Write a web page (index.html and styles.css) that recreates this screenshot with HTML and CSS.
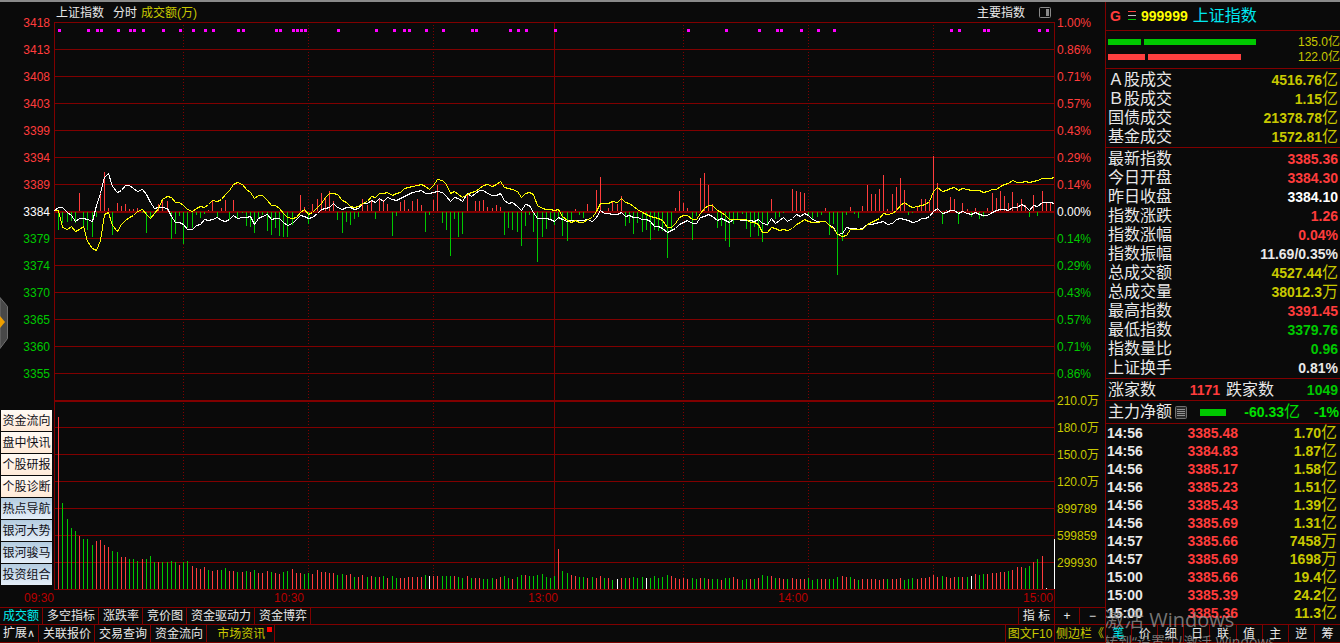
FILE: index.html
```html
<!DOCTYPE html>
<html lang="zh-CN">
<head>
  <meta charset="UTF-8" />
  <meta name="viewport" content="width=device-width, initial-scale=1" />
  <title>上证指数 分时</title>
  <link rel="stylesheet" href="styles.css">
</head>
<body>

  <main class="main">
    <header class="chart-head">
      <span class="name">上证指数</span>
      <span class="period">分时</span>
      <span class="yellow">成交额(万)</span>
      <button class="index-btn">主要指数</button>
      <button class="panel-btn" aria-label="侧栏">
        <svg width="12" height="11" viewBox="0 0 12 11">
          <rect x="0.5" y="0.5" width="11" height="10" rx="1" fill="none" stroke="#8a8a8a"/>
          <rect x="7" y="2" width="3" height="7" fill="#8a8a8a"/>
        </svg>
      </button>
    </header>

    <div class="chart-area">
      <div class="axis axis-left" id="axis-left"></div>
      <svg id="chart" class="chart" viewBox="0 0 1001 568" preserveAspectRatio="none"></svg>
      <div class="axis axis-right" id="axis-right"></div>

      <button class="drawer" aria-label="展开">
        <svg width="8" height="52" viewBox="0 0 8 52">
          <path d="M0 0.5L7.5 9.5V41.5L0 51.5Z" fill="#484848" stroke="#707070"/>
          <path d="M0 19L5 25L0 31Z" fill="#f0a000"/>
        </svg>
      </button>

      <nav class="quick">
        <button>资金流向</button>
        <button>盘中快讯</button>
        <button>个股研报</button>
        <button>个股诊断</button>
        <button class="blue">热点导航</button>
        <button class="blue">银河大势</button>
        <button class="blue">银河骏马</button>
        <button class="blue">投资组合</button>
      </nav>
    </div>

    <div class="time-axis">
      <span>09:30</span>
      <span>10:30</span>
      <span>13:00</span>
      <span>14:00</span>
      <span>15:00</span>
      <span class="time-end"></span>
    </div>

    <div class="tabs tabs-top">
      <button class="active">成交额</button>
      <button>多空指标</button>
      <button>涨跌率</button>
      <button>竞价图</button>
      <button>资金驱动力</button>
      <button>资金博弈</button>
      <div class="tabs-right">
        <button class="w-index">指 标</button>
        <button class="w-plus">+</button>
        <button class="w-minus">−</button>
      </div>
    </div>

    <div class="tabs tabs-bottom">
      <button>扩展<span class="caret">∧</span></button>
      <button>关联报价</button>
      <button>交易查询</button>
      <button>资金流向</button>
      <button class="news">市场资讯<i class="dot"></i></button>
      <div class="tabs-right">
        <button class="yellow w-f10">图文F10</button>
        <button class="yellow w-side">侧边栏《</button>
      </div>
    </div>
  </main>

  <aside class="side">
    <header class="side-head">
      <b class="mark">G</b>
      <svg width="8" height="10" viewBox="0 0 8 10">
        <path d="M0 0.5H8" stroke="#ff3c3c"/>
        <path d="M0 4.5H8" stroke="#c0c0c0"/>
        <path d="M0 8.5H8" stroke="#00c800"/>
      </svg>
      <b class="code">999999</b>
      <span class="title">上证指数</span>
    </header>

    <section class="orders">
      <div class="order green-bar"><i class="w33"></i><i class="w112"></i><span>135.0亿</span></div>
      <div class="order red-bar"><i class="w37"></i><i class="w93"></i><span>122.0亿</span></div>
    </section>

    <table class="quote">
      <tr><th>Ａ股成交</th><td class="yellow">4516.76<u>亿</u></td></tr>
      <tr><th>Ｂ股成交</th><td class="yellow">1.15<u>亿</u></td></tr>
      <tr><th>国债成交</th><td class="yellow">21378.78<u>亿</u></td></tr>
      <tr><th>基金成交</th><td class="yellow">1572.81<u>亿</u></td></tr>
    </table>

    <table class="quote">
      <tr><th>最新指数</th><td class="red">3385.36</td></tr>
      <tr><th>今日开盘</th><td class="red">3384.30</td></tr>
      <tr><th>昨日收盘</th><td class="white">3384.10</td></tr>
      <tr><th>指数涨跌</th><td class="red">1.26</td></tr>
      <tr><th>指数涨幅</th><td class="red">0.04%</td></tr>
      <tr><th>指数振幅</th><td>11.69/0.35%</td></tr>
      <tr><th>总成交额</th><td class="yellow">4527.44<u>亿</u></td></tr>
      <tr><th>总成交量</th><td class="yellow">38012.3<u>万</u></td></tr>
      <tr><th>最高指数</th><td class="red">3391.45</td></tr>
      <tr><th>最低指数</th><td class="green">3379.76</td></tr>
      <tr><th>指数量比</th><td class="green">0.96</td></tr>
      <tr><th>上证换手</th><td>0.81%</td></tr>
    </table>

    <section class="breadth">
      <div class="half up"><span>涨家数</span><b class="red">1171</b></div>
      <div class="half down"><span>跌家数</span><b class="green">1049</b></div>
    </section>

    <section class="netflow">
      <span>主力净额</span>
      <svg class="list-icon" width="12" height="13" viewBox="0 0 12 13">
        <rect x="0.5" y="0.5" width="11" height="12" rx="1" fill="#2a2a2a" stroke="#707070"/>
        <path d="M2 3.5H10M2 5.5H10M2 7.5H10M2 9.5H10" stroke="#909090"/>
      </svg>
      <i class="flow-bar"></i>
      <b class="flow-value">-60.33<u>亿</u></b>
      <b class="flow-pct">-1%</b>
    </section>

    <table class="ticks">
      <tr><td>14:56</td><td class="red">3385.48</td><td class="yellow">1.70<u>亿</u></td></tr>
      <tr><td>14:56</td><td class="red">3384.83</td><td class="yellow">1.87<u>亿</u></td></tr>
      <tr><td>14:56</td><td class="red">3385.17</td><td class="yellow">1.58<u>亿</u></td></tr>
      <tr><td>14:56</td><td class="red">3385.23</td><td class="yellow">1.51<u>亿</u></td></tr>
      <tr><td>14:56</td><td class="red">3385.43</td><td class="yellow">1.39<u>亿</u></td></tr>
      <tr><td>14:56</td><td class="red">3385.69</td><td class="yellow">1.31<u>亿</u></td></tr>
      <tr><td>14:57</td><td class="red">3385.66</td><td class="yellow">7458<u>万</u></td></tr>
      <tr><td>14:57</td><td class="red">3385.69</td><td class="yellow">1698<u>万</u></td></tr>
      <tr><td>15:00</td><td class="red">3385.66</td><td class="yellow">19.4<u>亿</u></td></tr>
      <tr><td>15:00</td><td class="red">3385.39</td><td class="yellow">24.2<u>亿</u></td></tr>
      <tr><td>15:00</td><td class="red">3385.36</td><td class="yellow">11.3<u>亿</u></td></tr>
    </table>

    <nav class="side-tabs">
      <button class="active">笔</button>
      <button>价</button>
      <button>细</button>
      <button>日</button>
      <button>联</button>
      <button>值</button>
      <button>主</button>
      <button>逆</button>
      <button>筹</button>
    </nav>

    <div class="watermark">
      <div class="big">激活 Windows</div>
      <div class="small">转到“设置”以激活 Windows。</div>
    </div>
  </aside>

  <script src="chart.js"></script>
</body>
</html>
```

FILE: styles.css
```css
* {
  box-sizing: border-box;
}

body {
  margin: 0;
  display: grid;
  grid-template-columns: 1fr 235px;
  min-height: 100vh;
  font-family: "Liberation Sans", "Noto Sans CJK SC", sans-serif;
  font-size: 12px;
  line-height: 16px;
  background: #0a0a0a;
  color: #e8e8e8;
  border-top: 2px solid #8a8a8a;
  border-bottom: 1px solid #f0d8d8;
  overflow: hidden;
}

button {
  font: inherit;
  color: inherit;
  background: none;
  border: none;
  padding: 0;
  white-space: nowrap;
  cursor: pointer;
}

u {
  font-size: 16px;
  font-weight: normal;
  text-decoration: none;
}

.red { color: #ff3c3c; }
.green { color: #00c800; }
.yellow { color: #c8c800; }
.white { color: #fff; }

/* chart side */
.main {
  display: flex;
  flex-direction: column;
  min-width: 0;
}

.chart-head {
  display: flex;
  align-items: center;
  height: 20px;
  padding: 2px 0 0 56px;
}

.period {
  margin: 0 4px 0 9px;
}

.index-btn {
  margin-left: auto;
}

.panel-btn {
  display: flex;
  margin: 0 54px 2px 14px;
}

.chart-area {
  position: relative;
  flex: 1;
  display: grid;
  grid-template-columns: 54px 1fr 50px;
}

.chart {
  display: block;
  width: 100%;
  height: 100%;
}

.axis {
  display: grid;
  grid-template-rows: repeat(21, 1fr);
  align-items: center;
  margin: -13px 0 14px;
}

.axis-left {
  padding-right: 4px;
  text-align: right;
}

.axis-right {
  padding-left: 2px;
}

.drawer {
  position: absolute;
  left: 0;
  top: 275px;
  display: flex;
}

.quick {
  position: absolute;
  left: 1px;
  bottom: 5px;
  width: 51px;
  display: flex;
  flex-direction: column;
  gap: 1px;
}

.quick button {
  height: 21px;
  color: #101018;
  background: linear-gradient(#fffaf4, #ffead8);
}

.quick .blue {
  background: linear-gradient(#b4cce0, #e4eef8);
}

.time-axis {
  display: grid;
  grid-template-columns: 54px 250fr 254fr 250fr 245fr 52px;
  height: 17px;
  text-align: right;
  color: #b80000;
}

.time-end {
  margin-left: 1px;
  border-left: 1px solid #800000;
}

.tabs {
  display: flex;
  border-top: 1px solid #800000;
}

.tabs-top {
  height: 17px;
}

.tabs-bottom {
  height: 19px;
  border-bottom: 1px solid #800000;
}

.tabs > button {
  padding: 0 3px 0 4px;
  border-right: 1px solid #800000;
}

.tabs > button:first-child {
  padding-left: 3px;
}

.caret {
  font-family: "DejaVu Sans", sans-serif;
  font-size: 11px;
}

.tabs .news {
  display: flex;
  align-items: center;
  padding: 0 2px 0 10px;
  color: #c8c800;
}

.dot {
  width: 5px;
  height: 5px;
  margin: 0 0 8px 2px;
  background: #f00;
}

.tabs-right {
  display: flex;
  margin-left: auto;
}

.tabs-right button {
  border-left: 1px solid #800000;
}

.w-index { width: 36px; }
.w-plus { width: 25px; }
.w-minus { width: 26px; }
.w-f10 { width: 49px; }
.w-side { width: 51px; }

.active,
.tabs .active {
  color: #00f0f0;
}

/* quote side */
.side {
  position: relative;
  display: flex;
  flex-direction: column;
  border-left: 1px solid #800000;
  font-size: 16px;
  overflow: hidden;
}

.side b {
  font-size: 14px;
}

.side-head {
  display: flex;
  align-items: center;
  height: 29px;
  padding-left: 4px;
  border-bottom: 1px solid #800000;
}

.side .mark {
  width: 18px;
  color: #ff3c3c;
}

.code {
  margin: 0 5px;
  color: #ff0;
}

.title {
  color: #00e8f0;
}

.orders {
  height: 38px;
  padding: 3px 0 0 2px;
  border-bottom: 1px solid #800000;
}

.order {
  display: flex;
  align-items: center;
  gap: 3px;
  height: 15px;
  font-size: 12px;
  color: #c8c800;
}

.order i {
  height: 6px;
}

.order span {
  width: 42px;
  margin-left: auto;
  white-space: nowrap;
}

.green-bar i { background: #00c800; }
.red-bar i { background: #ff4040; }
.w33 { width: 33px; }
.w112 { width: 112px; }
.w37 { width: 37px; }
.w93 { width: 93px; }

.quote,
.ticks {
  width: 100%;
  border-spacing: 0;
}

.quote {
  padding: 1px 2px;
  border-bottom: 1px solid #800000;
}

.quote tr {
  height: 19px;
}

.quote th,
.quote td,
.ticks td {
  padding: 0;
  white-space: nowrap;
}

.quote th {
  font-weight: normal;
  text-align: left;
}

.quote td {
  font-size: 14px;
  font-weight: bold;
  text-align: right;
}

.breadth {
  display: flex;
  gap: 6px;
  height: 22px;
  padding: 0 2px;
  border-bottom: 1px solid #800000;
}

.half {
  display: flex;
  align-items: center;
  justify-content: space-between;
}

.up { width: 112px; }
.down { flex: 1; }

.netflow {
  display: flex;
  align-items: center;
  height: 23px;
  padding: 0 1px 0 2px;
  border-bottom: 1px solid #800000;
  white-space: nowrap;
}

.list-icon {
  margin: 0 13px 0 3px;
}

.flow-bar {
  width: 26px;
  height: 7px;
  background: #00c800;
}

.flow-value {
  width: 74px;
  text-align: right;
  color: #00e000;
}

.flow-pct {
  margin-left: auto;
  color: #00e000;
}

.ticks {
  table-layout: fixed;
  padding: 0 3px 0 1px;
  font-size: 14px;
  font-weight: bold;
}

.ticks tr {
  height: 18px;
}

.ticks td {
  width: 99px;
  text-align: right;
}

.ticks td:first-child {
  width: 32px;
  text-align: left;
}

.side-tabs {
  display: flex;
  height: 19px;
  margin-top: auto;
  border-top: 1px solid #800000;
  border-bottom: 1px solid #800000;
  font-size: 12px;
}

.side-tabs button {
  flex: 1;
  border-right: 1px solid #800000;
}

.side-tabs button:last-child {
  border-right: none;
}

.watermark {
  position: absolute;
  left: -2px;
  top: 606px;
  font-family: "Open Sans", "Noto Sans CJK SC", sans-serif;
  color: rgba(165, 165, 165, 0.7);
  white-space: nowrap;
  pointer-events: none;
}

.big {
  font-size: 20px;
  line-height: 24px;
}

.small {
  font-size: 14px;
  line-height: 20px;
}
```

FILE: chart.js
```javascript
const GRID = "#800000";
const RED = "#ff3c3c";
const GREEN = "#00c800";
const ROW = 27;
const ZERO = 189;
const BASE = 567;

const prices = [3418, 3413, 3408, 3403, 3399, 3394, 3389, 3384, 3379, 3374, 3370, 3365, 3360, 3355];
const percents = ["1.00%", "0.86%", "0.71%", "0.57%", "0.43%", "0.29%", "0.14%", "0.00%",
  "0.14%", "0.29%", "0.43%", "0.57%", "0.71%", "0.86%"];
const volumes = ["210.0万", "180.0万", "150.0万", "120.0万", "899789", "599859", "299930"];

// markers along the top
const marks = [59, 88, 97, 101, 118, 130, 134, 143, 163, 180, 193, 205, 213, 238, 243, 276, 280, 293,
  297, 301, 305, 338, 376, 394, 404, 409, 426, 443, 472, 476, 510, 518, 526, 555, 688, 726, 759, 777,
  781, 801, 818, 834, 951, 959, 984, 988, 1039, 1047];

// one value per minute, minute 1 to 240
const strength = [-18,-11,-10,-9,-11,18,-15,-18,-25,-5,18,39,3,-23,8,5,7,2,2,3,
  -1,-21,-6,-2,7,10,10,-27,-22,-4,-32,-16,-16,-3,-6,-2,1,10,-6,3,
  11,-8,11,-7,-1,-14,-15,-21,-6,-3,-19,-23,-16,-24,-25,-25,-13,0,16,4,
  -12,7,12,18,14,20,10,-8,-21,-10,-13,-7,-5,12,6,11,-7,13,11,7,
  -24,-4,9,11,2,10,12,6,-20,-3,11,26,-11,-18,-44,-7,-25,-22,18,0,
  10,10,11,4,3,6,4,-23,-16,-18,-20,-34,-14,-3,-20,-50,-25,-17,-8,-13,
  -7,-24,-29,-8,2,-3,-6,7,0,21,34,0,3,10,7,15,-14,-11,-22,-11,
  -20,-18,-28,-18,-19,-19,-46,-18,3,20,8,3,-28,-4,33,38,26,7,-16,-14,
  -29,-35,-12,-8,-2,-17,-25,-15,-24,-30,-14,12,-7,-5,-1,0,22,20,19,18,
  -3,-8,-5,-3,3,-23,-12,-63,-29,-3,4,-2,-6,5,26,17,17,22,36,2,
  17,24,33,21,-3,-1,5,12,12,11,55,28,-12,1,14,12,-12,8,2,-5,
  3,-7,-5,3,18,13,20,15,8,19,8,12,6,-5,16,-4,20,8,9,0];

const white = [1,4,4,-1,-4,-10,-7,-7,-8,-10,6,18,34,38,25,19,21,26,26,23,20,22,17,9,3,4,4,3,-5,-11,-11,
  -13,-18,-18,-14,-13,-8,-9,-8,-6,-9,-10,-8,-4,-7,-6,-6,-5,-13,-7,-5,-3,-8,-7,-7,-11,-14,-12,-8,-4,-5,-7,
  -6,-2,2,3,4,8,4,2,4,4,2,3,8,8,11,9,13,10,14,12,11,13,15,17,19,20,21,18,18,19,20,19,15,10,14,13,10,18,
  15,18,21,21,18,16,16,18,11,8,9,5,1,7,6,-1,-7,-7,-7,-8,-10,-6,
  -8,-10,-9,-9,-9,-9,-8,-10,-6,1,-2,-2,-3,-3,-1,-5,-4,-6,-6,-8,-8,-10,-15,-15,-17,-21,-19,-17,-13,-11,-9,
  -12,-12,-6,-5,-3,-5,-9,-7,-9,-11,-8,-8,-9,-9,-9,-10,-8,-12,-13,-7,-12,-9,-6,-10,-7,-3,-5,-2,-4,
  -8,-10,-10,-10,-14,-16,-23,-22,-16,-17,-17,-18,-17,-13,-13,-12,-11,-10,-13,-12,-8,-7,-8,-9,-11,-10,-7,
  -7,-5,0,3,-2,-1,1,1,-2,0,-2,-3,-1,-3,-4,-4,-1,1,2,2,1,4,4,7,5,1,6,5,9,9,9,8];

const yellow = [1,1,-16,-18,-15,-20,-18,-15,-30,-37,-39,-29,-3,-1,-14,-20,-13,-9,-6,-4,0,2,-3,-7,-2,3,12,15,
  14,9,9,6,2,0,3,5,4,7,11,10,12,17,21,27,29,27,22,19,13,16,16,11,6,6,3,-2,-6,-7,-6,-1,2,-3,
  -1,4,8,14,18,18,17,11,9,5,4,5,8,10,15,14,18,18,19,16,18,19,23,24,25,26,27,25,22,26,32,31,27,18,20,17,14,
  17,19,20,23,26,27,25,27,30,24,23,22,20,14,18,19,17,6,3,2,2,1,2,
  -5,-9,-11,-9,-11,-11,-8,-6,0,8,8,8,10,9,13,9,8,5,2,-1,-3,-5,-6,-7,-9,-16,-16,-12,-6,-4,-4,
  -8,-8,-2,3,6,6,1,-1,-4,-8,-8,-8,-8,-8,-11,-11,-13,-21,-21,-16,-17,-19,-18,-19,-17,-13,-11,-8,-10,
  -11,-11,-10,-10,-14,-17,-23,-25,-24,-18,-18,-18,-18,-13,-11,-9,-7,-2,-3,-2,1,6,9,6,4,5,6,
  7,10,20,24,20,21,23,24,21,23,22,21,21,21,19,20,22,22,25,27,28,31,29,29,30,29,30,31,33,33,33,34];

// r = up, g = down, w = flat
const turnover = `r172 g86 g70 g61 g58 r53 g50 g50 g44 r48 r49 r44 r42 g38 g37 r32 r32 g30 g30 g28
  r30 g30 g33 g27 r27 g27 g27 g28 g27 r24 g27 g28 r23 r21 r20 r22 g19 r18 r19 g19
  g21 r18 r18 g17 r17 g18 r17 g19 r16 r16 r18 g17 r16 r15 g17 g18 r20 r16 r16 g15
  g16 r15 r19 r17 r17 r16 r16 g14 g15 r14 r15 g12 r12 r14 g12 r13 g12 r12 g13 r11
  g13 g11 r11 r11 r12 r12 r12 r12 g14 w13 r13 r13 g13 g13 g13 r13 g12 g11 r13 g11
  r11 r11 g10 g10 g11 r10 r12 g13 g11 r10 g12 g14 r14 g13 g13 g14 g15 g12 g11 g13
  r40 g18 g16 r14 r13 g12 g12 r11 g12 r11 r13 g11 r11 g9 w10 r11 g11 r11 g12 g11
  g12 w11 g11 g13 g11 g12 g14 r13 r11 r10 r11 r10 g11 g10 r11 g11 r10 g10 g10 r9
  g11 g11 r12 r10 g9 g10 r10 g10 r11 g14 g13 r13 g11 r11 r10 g10 r11 r10 r10 r10
  g11 g9 g10 r10 r10 g10 g10 g12 r13 r12 g12 r10 g9 r10 r10 r10 r10 r9 r10 g10
  r10 r10 r11 g9 g10 g11 r10 r11 r11 r12 r14 r12 g13 r12 r11 r12 g12 r12 g12 w13
  r15 g14 g15 r15 r16 r16 r17 r17 g18 r19 r22 r22 g21 g23 r27 g30 r33 w1 w0 w50`.split(/\s+/);

const xAt = (i) => Math.round(i * 1000 / 240);
const rect = (x, y, w, h, fill) => `<rect x="${x}" y="${y}" width="${w}" height="${h}" fill="${fill}"/>`;

function drawAxes() {
  const tone = (k) => (k < 7 ? "red" : k === 7 ? "white" : "green");
  document.getElementById("axis-left").innerHTML =
    prices.map((p, k) => `<span class="${tone(k)}">${p}</span>`).join("");
  document.getElementById("axis-right").innerHTML =
    percents.map((p, k) => `<span class="${tone(k)}">${p}</span>`).join("") +
    volumes.map((v) => `<span class="yellow">${v}</span>`).join("");
}

function drawChart() {
  let out = "";

  for (let k = 0; k <= 21; k++) {
    out += rect(0, k * ROW, 1001, k === 7 || k === 14 ? 2 : 1, GRID);
  }
  for (const x of [0, 500, 1000]) {
    out += rect(x, 0, 1, 568, GRID);
  }
  for (const x of [129, 254, 379, 629, 754, 879]) {
    out += `<path d="M${x + 0.5} 3V567" stroke="${GRID}" stroke-dasharray="1 2"/>`;
  }
  for (const m of marks) {
    out += rect(m - 55, 7, 3, 3, "#ff00ff");
  }

  strength.forEach((v, k) => {
    const x = xAt(k + 1);
    if (v > 0) out += rect(x, ZERO - v, 1, v, RED);
    if (v < 0) out += rect(x, ZERO + 1, 1, -v, GREEN);
  });

  turnover.forEach((t, k) => {
    const h = Number(t.slice(1));
    const fill = { r: RED, g: GREEN, w: "#fff" }[t[0]];
    out += rect(xAt(k + 1), BASE - h, 1, h, fill);
  });

  const line = (data, stroke) =>
    `<polyline fill="none" stroke="${stroke}" points="${data.map((v, k) => `${xAt(k) + 0.5},${ZERO + 0.5 - v}`).join(" ")}"/>`;
  out += line(white, "#fff") + line(yellow, "#ff0");

  document.getElementById("chart").innerHTML = `<g shape-rendering="crispEdges">${out}</g>`;
}

drawAxes();
drawChart();
```
